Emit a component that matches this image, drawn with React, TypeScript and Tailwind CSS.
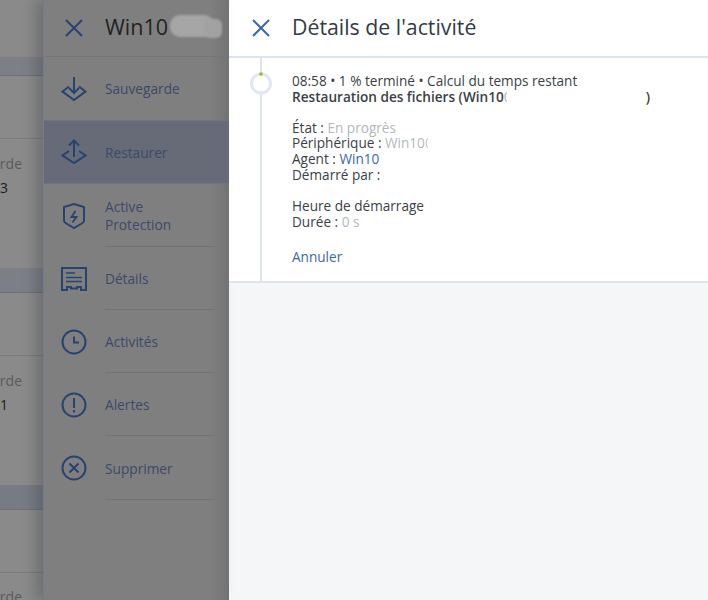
const font = "font-['Open_Sans',sans-serif]";

function SaveIcon() {
  return (
    <svg width="26" height="26" viewBox="0 0 26 26" fill="none" stroke="#27436f" strokeWidth="2">
      <path d="M13 1v16M8 12l5 5 5-5" />
      <path d="M8 10.500L1.500 15.500 13 24l11.500-8.500L18 10.500" />
    </svg>
  );
}

function RestoreIcon() {
  return (
    <svg width="26" height="26" viewBox="0 0 26 26" fill="none" stroke="#27436f" strokeWidth="2">
      <path d="M13 1.500V18M8 6.500l5-5 5 5" />
      <path d="M8 12L1.500 16.500 13 24l11.500-7.500L18 12" />
    </svg>
  );
}

function ShieldIcon() {
  return (
    <svg width="24" height="28" viewBox="0 0 24 28" fill="none" stroke="#27436f" strokeWidth="2">
      <path d="M12 2l10 3v13.500q0 1.500-1.500 2.500L12 26l-8.500-5Q2 20 2 18.500V5z" />
      <path d="M13.500 9l-4 6h5l-4 5.500" strokeWidth="1.800" />
    </svg>
  );
}

function DetailsIcon() {
  return (
    <svg width="26" height="24" viewBox="0 0 26 24" fill="none" stroke="#27436f" strokeWidth="2">
      <path d="M1 1h24v22h-5v-3h-4v1.500h-6V20H6v3H1z" />
      <path d="M5 6h9M5 10.500h16M5 14.500h16" strokeWidth="1.500" />
    </svg>
  );
}

function ClockIcon() {
  return (
    <svg width="26" height="26" viewBox="0 0 26 26" fill="none" stroke="#27436f" strokeWidth="2">
      <circle cx="13" cy="13" r="11.500" />
      <path d="M13 7.500v6h5" />
    </svg>
  );
}

function AlertIcon() {
  return (
    <svg width="26" height="26" viewBox="0 0 26 26" fill="none" stroke="#27436f" strokeWidth="2">
      <circle cx="13" cy="13" r="11.500" />
      <path d="M13 6v10M13 18v2.500" />
    </svg>
  );
}

function DeleteIcon() {
  return (
    <svg width="26" height="26" viewBox="0 0 26 26" fill="none" stroke="#27436f" strokeWidth="2">
      <circle cx="13" cy="13" r="11.500" />
      <path d="M8.500 8.500l9 9M17.500 8.500l-9 9" />
    </svg>
  );
}

function CloseIcon({ color }: { color: string }) {
  return (
    <svg width="18" height="18" viewBox="0 0 18 18" fill="none" stroke={color} strokeWidth="2">
      <path d="M1 1l16 16M17 1L1 17" />
    </svg>
  );
}

function LeftStrip() {
  return (
    <div className="h-[600px] w-[43px] shrink-0 overflow-hidden bg-[#8a8a8a] text-[14px] leading-[24px]">
      <div className="h-[57px]" />
      <div className="h-[19px] border-b border-[#6c7078] bg-[#7c8086]" />
      <div className="mt-[62px] h-[130px] border-t border-[#7c7c7c] pt-[13px]">
        <div className="flex justify-end whitespace-nowrap pr-[21px] text-[#5a5a5a]">Sauvegarde</div>
        <div className="flex justify-end whitespace-nowrap pr-[35px] text-[#1d1d1d]">13</div>
      </div>
      <div className="h-[25px] border-b border-[#6c7078] bg-[#7c8086]" />
      <div className="mt-[62px] h-[130px] border-t border-[#7c7c7c] pt-[13px]">
        <div className="flex justify-end whitespace-nowrap pr-[21px] text-[#5a5a5a]">Sauvegarde</div>
        <div className="flex justify-end whitespace-nowrap pr-[35px] text-[#1d1d1d]">11</div>
      </div>
      <div className="h-[25px] border-b border-[#6c7078] bg-[#777c84]" />
      <div className="mt-[62px] border-t border-[#7c7c7c] pt-[12px]">
        <div className="flex justify-end whitespace-nowrap pr-[21px] text-[#5a5a5a]">Sauvegarde</div>
      </div>
    </div>
  );
}

const items = [
  { label: "Sauvegarde", icon: <SaveIcon /> },
  { label: "Restaurer", icon: <RestoreIcon />, active: true },
  { label: "Active Protection", icon: <ShieldIcon /> },
  { label: "Détails", icon: <DetailsIcon /> },
  { label: "Activités", icon: <ClockIcon /> },
  { label: "Alertes", icon: <AlertIcon /> },
  { label: "Supprimer", icon: <DeleteIcon />, last: true },
];

function Menu() {
  return (
    <div className="relative h-[600px] w-[186px] shrink-0 overflow-hidden border-l border-[#6f7c94] bg-gradient-to-r from-[#7f7f7f] from-90% to-[#737373] shadow-[-8px_0_12px_rgba(0,0,0,0.18)]">
      <div className="relative flex h-[57px] items-center border-b border-[#72777f] pl-[21px]">
        <CloseIcon color="#27436f" />
        <span className="ml-[22px] pb-[2px] text-[21.500px] text-[#232323]">Win10</span>
        <div className="absolute left-[126px] top-[15px] h-[22px] w-[44px] rounded-[10px] bg-[#a6a6a6] blur-[1px]" />
        <div className="absolute left-[160px] top-[19px] h-[19px] w-[18px] rounded-[6px] bg-[#a2a2a2] blur-[1px]" />
      </div>
      {items.map((item, i) => (
        <div
          key={item.label}
          className={
            item.active
              ? "flex h-[64px] items-center border-y border-[#6f7683] bg-[#666b77]"
              : item.last
                ? "flex h-[64px] items-center"
                : "flex h-[63px] items-center"
          }
        >
          <div className="flex w-[62px] shrink-0 justify-center pr-[2px]">{item.icon}</div>
          <div
            className={
              i >= 2
                ? "mr-[14px] -ml-[1px] flex h-full flex-1 items-center border-b border-[#727272] pt-[2px] pr-2"
                : "-ml-[1px] flex h-full flex-1 items-center pt-[1px] pr-2"
            }
          >
            <span className="text-[13.700px] leading-[18px] text-[#3c4a67]">{item.label}</span>
          </div>
        </div>
      ))}
    </div>
  );
}

// blurred-out end of the device name, only a sliver of the next character shows
function Sliver() {
  return <span className="inline-block w-[3px] overflow-hidden align-bottom opacity-30">0</span>;
}

function Details() {
  return (
    <div className="h-[600px] flex-1 bg-[#f5f6f8]">
      <div className="flex h-[58px] items-center border-b-2 border-[#dbe4ef] bg-white pl-[23px]">
        <CloseIcon color="#3a69a8" />
        <h1 className="ml-[22px] pb-[2px] text-[21.300px] font-normal text-[#333b46]">Détails de l'activité</h1>
      </div>
      <div className="relative h-[225px] border-b-2 border-[#dbe4ef] bg-white pt-[15px] pl-[63px] text-[13.600px] leading-[15.800px] text-[#3a3f47]">
        <div className="absolute top-0 bottom-0 left-[31px] w-[2px] bg-[#dbe4ef]" />
        <svg className="absolute top-[13px] left-[21px]" width="22" height="24" viewBox="0 0 22 24" fill="none">
          <circle cx="11" cy="12.500" r="9.500" fill="white" stroke="#e0e7f1" strokeWidth="3" />
          <path d="M9.500 1.500h3v3h-3z" fill="#94bd14" />
        </svg>
        <p>08:58 • 1 % terminé • Calcul du temps restant</p>
        <p className="flex font-semibold">
          Restauration des fichiers (Win10
          <Sliver />
          <span className="w-[139px]" />)
        </p>
        <div className="mt-[15px]">
          <p>
            État : <span className="inline-block text-[#b4b8bd]">En progrès</span>
          </p>
          <p>
            Périphérique : <span className="inline-block text-[#b4b8bd]">Win10</span>
            <Sliver />
          </p>
          <p>
            Agent : <span className="inline-block text-[#3a69a8]">Win10</span>
          </p>
          <p>Démarré par :</p>
        </div>
        <div className="mt-[15px]">
          <p>Heure de démarrage</p>
          <p>
            Durée : <span className="inline-block text-[#b4b8bd]">0 s</span>
          </p>
        </div>
        <p className="mt-[20px] text-[#3a69a8]">Annuler</p>
      </div>
    </div>
  );
}

export default function App() {
  return (
    <div className={`flex h-[600px] w-[708px] overflow-hidden ${font}`}>
      <LeftStrip />
      <Menu />
      <Details />
    </div>
  );
}
